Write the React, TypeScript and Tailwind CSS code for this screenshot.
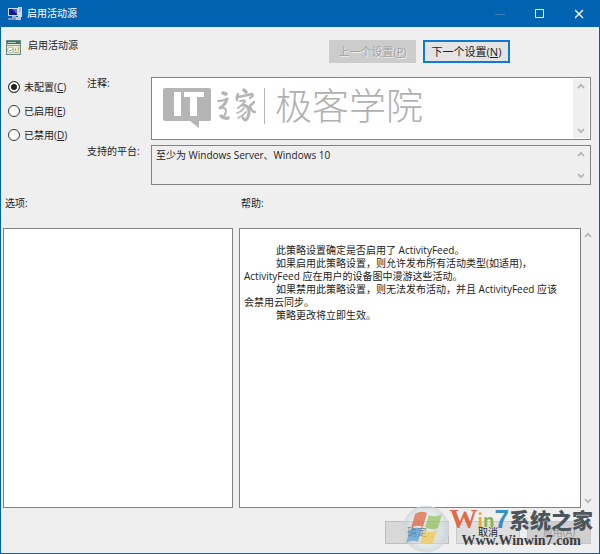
import React from "react";

const FONT = "font-['Open_Sans','Noto_Sans_CJK_SC',sans-serif]";

type Option = {
  id: string;
  label: string;
  shortcut: string;
};

const OPTIONS: Option[] = [
  { id: "not-configured", label: "未配置", shortcut: "C" },
  { id: "enabled", label: "已启用", shortcut: "E" },
  { id: "disabled", label: "已禁用", shortcut: "D" },
];

const Chevron = ({ down = false }: { down?: boolean }) => (
  <svg width="8" height="6" viewBox="0 0 8 6" fill="none" stroke="#b4b4b4" strokeWidth="1.8">
    <path d={down ? "M1 1 L4 4.2 L7 1" : "M1 5 L4 1.8 L7 5"} />
  </svg>
);

const ScrollBar = () => (
  <div className="flex w-4 shrink-0 flex-col items-center justify-between bg-[#efefef] py-1">
    <Chevron />
    <Chevron down />
  </div>
);

const ComputerIcon = () => (
  <svg width="14" height="14" viewBox="0 0 14 14">
    <rect x="0" y="1" width="10" height="8" fill="#c9d5e8" />
    <rect x="1" y="2" width="8" height="6" fill="#101a8c" />
    <path d="M4 2h5v5z" fill="#4a69dd" />
    <rect x="10" y="0" width="4" height="10" fill="#d5d9e8" />
    <path d="M11 2h2M11 4h2" stroke="#8c91ac" />
    <path d="M4 9h4v2H4z" fill="#98a8c8" />
    <path d="M0 11h8v2H0z" fill="#8795bd" />
    <path d="M8 10h5v3H8z" fill="#bfc7dc" />
  </svg>
);

const PolicyIcon = () => (
  <svg width="15" height="15" viewBox="0 0 15 15">
    <rect x="0.5" y="0.5" width="14" height="14" fill="#e9e8d8" stroke="#698a80" />
    <rect x="1" y="1" width="13" height="3" fill="#456f69" />
    <path d="M2 2.5h8" stroke="#a8c9bd" />
    <path d="M1 5.5h13" stroke="#8fa89d" />
    <circle cx="4.5" cy="10" r="3" fill="#fff" stroke="#b3b2a0" />
    <path d="M3.5 10l1 1 2-2" fill="none" stroke="#4c936a" />
    <path d="M9 8h1v3H9zM12 7h1v4h-1z" fill="#c9b25e" />
    <path d="M8 12.5h5" stroke="#a8b296" />
  </svg>
);

const IthomeMark = () => (
  <svg width="94" height="40" viewBox="0 0 94 40" fill="#b5b5b5">
    <path
      fillRule="evenodd"
      d="M2 0H46Q48 0 48 2V31Q48 33 46 33H36V40L27 33H2Q0 33 0 31V2Q0 0 2 0ZM11 4V28H18V4ZM21 4V9H27V28H34V9H41V4Z"
    />
    <g fill="none" stroke="#b5b5b5" strokeLinecap="round" strokeLinejoin="round">
      <path d="M60 5l3 1" strokeWidth="3.5" />
      <path d="M55 13q5 0 9-2" strokeWidth="2" />
      <path d="M64 11q-1 5-7 9" strokeWidth="3" />
      <path d="M57 20q6-1 6 3q0 2-2 5" strokeWidth="2" />
      <path d="M58 28q3 3 7 2" strokeWidth="3.5" />
      <path d="M81 2l2 2" strokeWidth="3.5" />
      <path d="M75 6q-2 3-1 6M75 9q6-1 14-3q2 2-2 4" strokeWidth="2.5" />
      <path d="M77 13q4-1 5 0q-2 4-7 7" strokeWidth="2" />
      <path d="M80 17q5 0 6 6q0 6-3 9q-2 0-3-2" strokeWidth="3" />
      <path d="M81 20q-3 4-7 5M83 24q-3 4-8 6" strokeWidth="1.8" />
      <path d="M91 14l-4 4M87 19q2 5 5 5" strokeWidth="2.5" />
    </g>
  </svg>
);

const WindowsOrb = () => (
  <svg width="48" height="48" viewBox="0 0 48 48">
    <defs>
      <radialGradient id="orb">
        <stop offset="0" stopColor="#ffffff" stopOpacity="0.5" />
        <stop offset="0.75" stopColor="#d4e6ea" stopOpacity="0.6" />
        <stop offset="1" stopColor="#c8cdd0" stopOpacity="0.8" />
      </radialGradient>
    </defs>
    <circle cx="24" cy="24" r="23" fill="url(#orb)" stroke="#dadada" />
    <path d="M13 9q6-4 12-1l-4 14q-6-3-12 1z" fill="#e1704f" />
    <path d="M27 10q6 3 13-1l-4 14q-6 3-13-1z" fill="#9bc66b" />
    <path d="M8 25q6-4 12-1l-4 13q-6-3-12 1z" fill="#6aa7d8" />
    <path d="M22 25q6 4 13 0l-4 13q-6 3-13-1z" fill="#f0cf62" />
  </svg>
);

const TitleBar = () => (
  <header className="flex h-[27px] items-center bg-[#0063b1] pl-2 text-white">
    <ComputerIcon />
    <h1 className="ml-[5px] grow text-[10px]">启用活动源</h1>
    <button type="button" aria-label="最小化" disabled className="flex h-full w-10 items-center justify-center">
      <svg width="10" height="10" stroke="#397fb8"><path d="M0 5.5h10" /></svg>
    </button>
    <button type="button" aria-label="最大化" className="flex h-full w-10 items-center justify-center">
      <svg width="10" height="10" fill="none" stroke="#fff"><path d="M0.5 0.5h8v8h-8z" /></svg>
    </button>
    <button type="button" aria-label="关闭" className="flex h-full w-10 items-center justify-center">
      <svg width="10" height="10" stroke="#fff" strokeWidth="1.3"><path d="M0 1l8 8M8 1l-8 8" /></svg>
    </button>
  </header>
);

const PolicyHeader = () => (
  <div className="flex h-[50px] items-start pl-[5px] pr-[89px]">
    <div className="flex grow items-center gap-[7px] pt-[11px]">
      <PolicyIcon />
      <h2 className="pb-1 text-[10px]">启用活动源</h2>
    </div>
    <div className="flex gap-[7px] pt-[13px] text-[11px] leading-none">
      <button type="button" disabled className="h-[23px] w-[87px] bg-[#cccccc] text-[#a3a3a3] [text-shadow:1px_1px_0_#ededed]">
        上一个设置(<u>P</u>)
      </button>
      <button type="button" className="h-[23px] w-[87px] border-2 border-[#0f7ad0] bg-[#e4e4e4]">
        下一个设置(<u>N</u>)
      </button>
    </div>
  </div>
);

const StateOptions = () => (
  <fieldset className="flex w-20 shrink-0 flex-col gap-3 pl-[7px] pt-1">
    {OPTIONS.map(({ id, label, shortcut }, index) => (
      <label key={id} htmlFor={id} className="flex h-3 items-center gap-1 whitespace-nowrap">
        <input
          type="radio"
          id={id}
          name="state"
          defaultChecked={index === 0}
          className="size-3 shrink-0 appearance-none rounded-full border border-[#333] bg-white checked:bg-[#222] checked:shadow-[inset_0_0_0_2px_white]"
        />
        <span>{label}(<u>{shortcut}</u>)</span>
      </label>
    ))}
  </fieldset>
);

const Details = () => (
  <div className="flex pr-2">
    <StateOptions />
    <div className="ml-1.5 flex min-w-0 grow flex-col gap-[5px]">
      <div className="flex">
        <label htmlFor="comment" className="w-16 shrink-0 leading-3">注释:</label>
        <div className="relative flex h-[63px] min-w-0 grow border border-[#828282] bg-white p-px">
          <textarea id="comment" className="min-w-0 grow resize-none outline-none" />
          <ScrollBar />
          <div className="pointer-events-none absolute left-[11px] top-[10px] flex text-[#b0b0b0]">
            <IthomeMark />
            <div className="ml-[7px] h-9 border-l border-[#b5b5b5]" />
            <span className="ml-2.5 whitespace-nowrap text-[37px] font-light leading-8 font-['Noto_Sans_CJK_SC',sans-serif]">极客学院</span>
          </div>
        </div>
      </div>
      <div className="flex">
        <label htmlFor="platforms" className="w-16 shrink-0 leading-3">支持的平台:</label>
        <div className="flex h-10 min-w-0 grow border border-[#828282] p-px">
          <textarea
            id="platforms"
            readOnly
            defaultValue="至少为 Windows Server、Windows 10"
            className="min-w-0 grow resize-none px-[3px] py-0.5 leading-[13px] outline-none"
          />
          <ScrollBar />
        </div>
      </div>
    </div>
  </div>
);

const HelpText = () => (
  <div className="px-1 pt-[15px] leading-[13px] [&>p]:indent-8">
    <p>此策略设置确定是否启用了 ActivityFeed。</p>
    <p>如果启用此策略设置，则允许发布所有活动类型(如适用)，<br />ActivityFeed 应在用户的设备图中漫游这些活动。</p>
    <p>如果禁用此策略设置，则无法发布活动，并且 ActivityFeed 应该<br />会禁用云同步。</p>
    <p>策略更改将立即生效。</p>
  </div>
);

const Panels = () => (
  <div className="flex grow gap-1.5 pl-0.5 pt-3">
    <section className="flex w-[230px] shrink-0 flex-col">
      <h3 className="h-[31px] pl-0.5 leading-3">选项:</h3>
      <div className="grow border border-[#828282] bg-white" />
    </section>
    <section className="flex min-w-0 grow flex-col">
      <h3 className="h-[31px] pl-0.5 leading-3">帮助:</h3>
      <div className="flex grow">
        <div className="min-w-0 grow border border-[#828282] bg-white">
          <HelpText />
        </div>
        <div className="flex w-[18px] flex-col items-center justify-between py-1 pr-1">
          <Chevron />
          <Chevron down />
        </div>
      </div>
    </section>
  </div>
);

const SiteMark = () => (
  <div className="pointer-events-none absolute bottom-1 right-1.5 flex items-end">
    <div className="-mb-1 opacity-80"><WindowsOrb /></div>
    <div>
      <div className="flex h-7 items-center whitespace-nowrap text-[21px] font-bold leading-7 text-[#4b555b] font-['Noto_Sans_CJK_SC',sans-serif]">
        <span className="text-[28px] text-[#df6849] font-['Liberation_Serif',serif]">W</span>
        <span className="text-lg leading-7 text-[#e3a944]">i</span>
        <span className="text-lg leading-7 text-[#83b557]">n</span>
        <span className="text-[26px] leading-7 text-[#3a8fc4] font-['Liberation_Sans',sans-serif]">7</span>
        <span className="font-black">系统之家</span>
      </div>
      <div className="pl-3 text-sm font-bold leading-4 text-[#3c3c3c] font-['Liberation_Serif',serif]">Www.Winwin7.com</div>
    </div>
  </div>
);

const Footer = () => (
  <footer className="relative flex h-[45px] items-center justify-end gap-[7px] pr-2 pt-1">
    <button type="button" className="h-[23px] w-16 border border-[#bdbdbd] bg-[#d8d8d8]">确定</button>
    <button type="button" className="h-[23px] w-16 border border-[#c9c9c9] bg-[#dedede]">取消</button>
    <button type="button" disabled className="h-[23px] w-16 border border-[#c4c4c4] bg-[#cfcfcf] text-[#999]">
      应用(<u>A</u>)
    </button>
    <SiteMark />
  </footer>
);

const App = () => {
  return (
    <main className={`flex min-h-screen flex-col bg-[#0063b1] text-[10px] text-[#222] ${FONT}`}>
      <TitleBar />
      <div className="mx-px mb-px flex grow flex-col bg-[#efefef]">
        <PolicyHeader />
        <Details />
        <Panels />
        <Footer />
      </div>
    </main>
  );
};

export default App;
